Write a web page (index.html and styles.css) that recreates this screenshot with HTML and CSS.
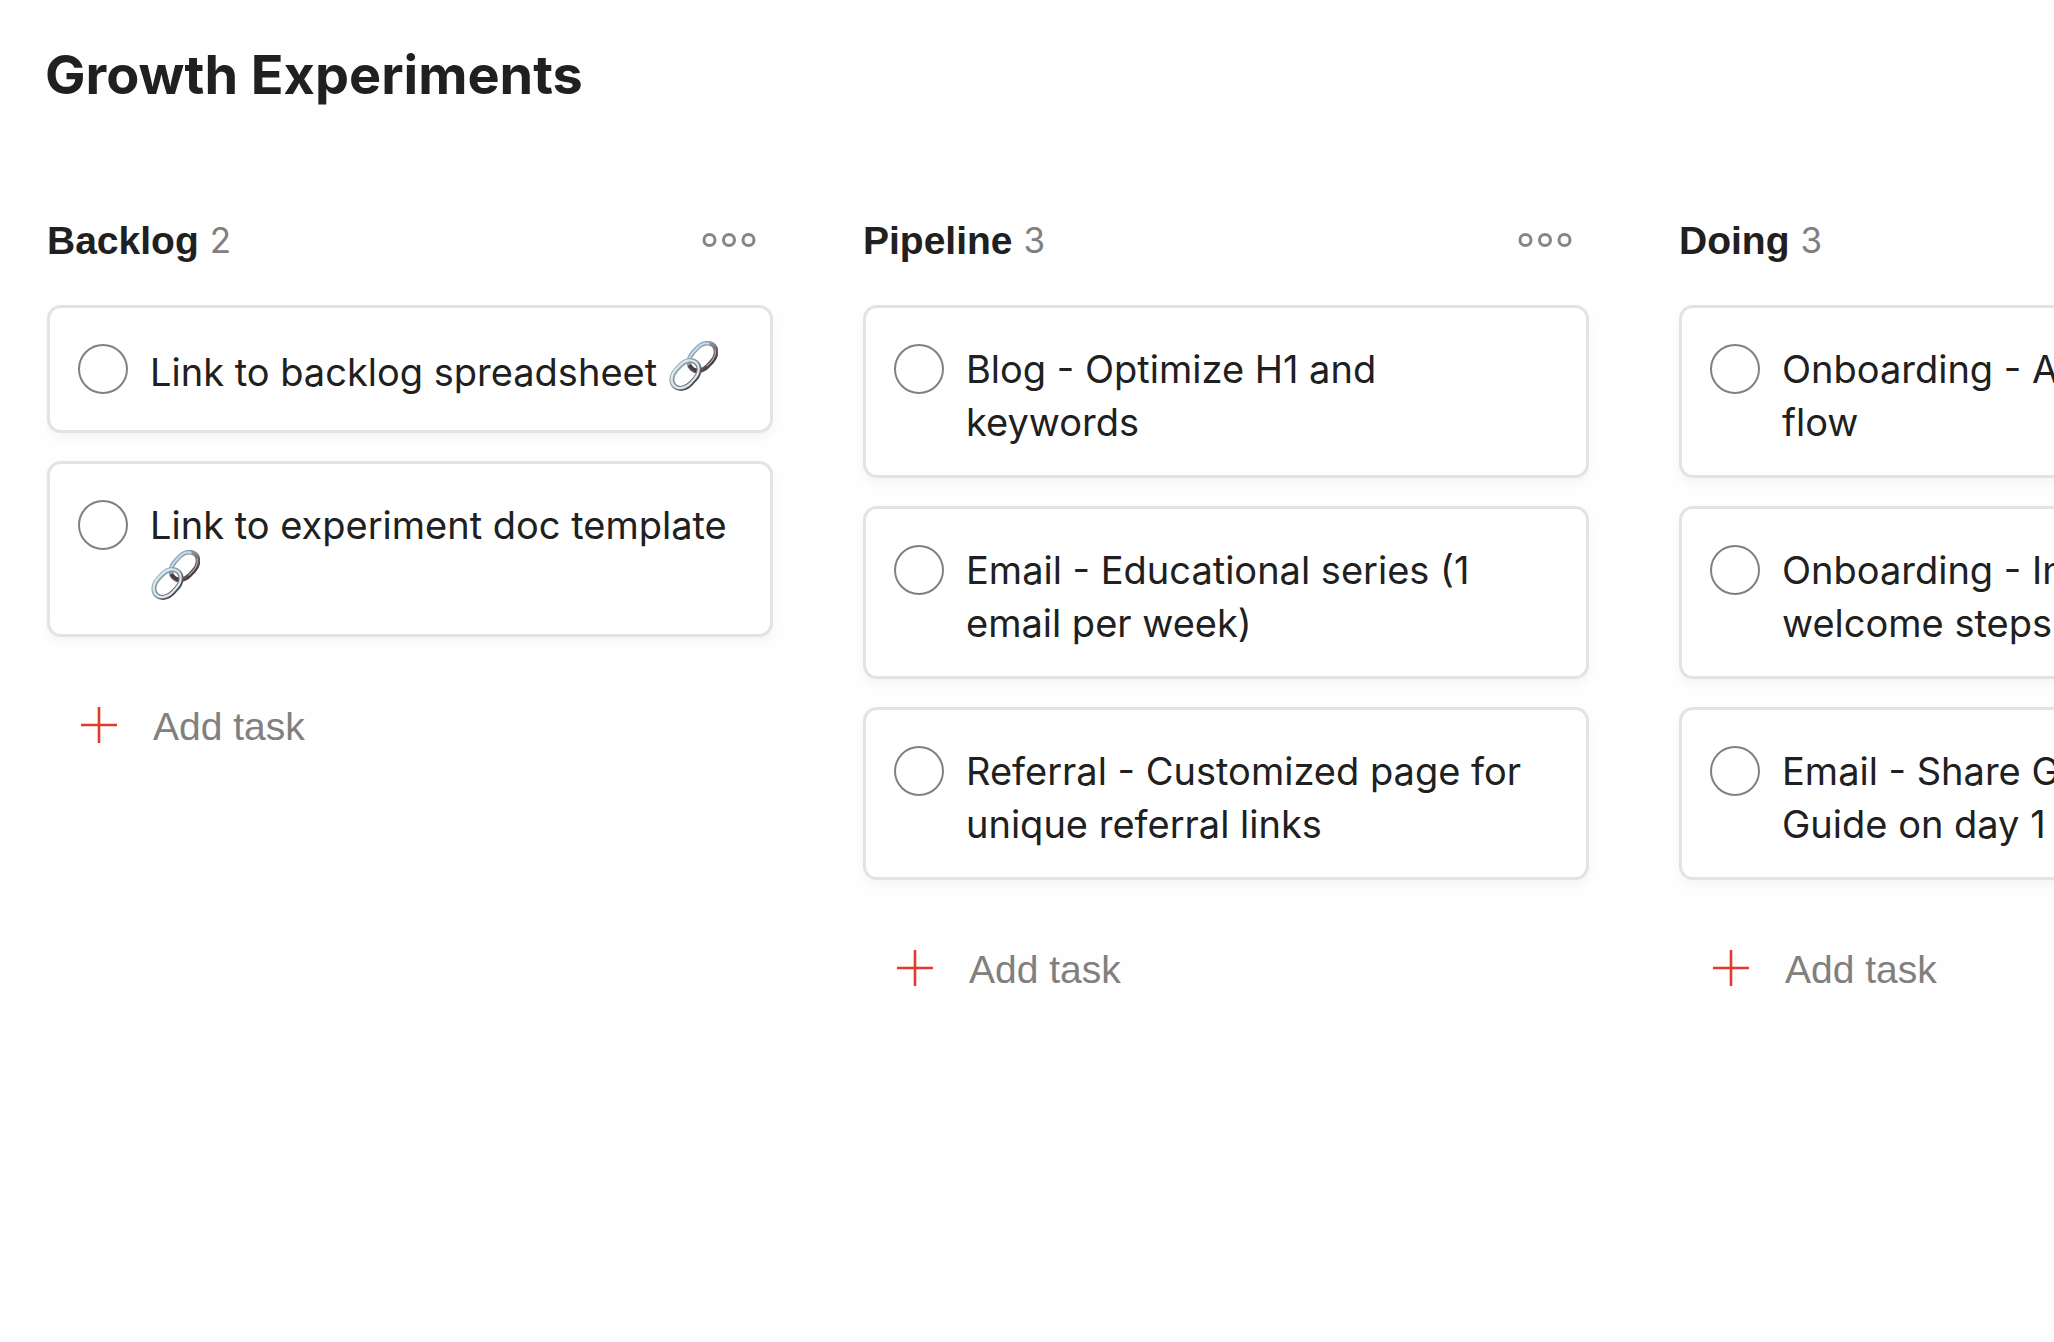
FILE: index.html
```html
<!DOCTYPE html>
<html lang="en">
<head>
<meta charset="utf-8">
<meta name="viewport" content="width=device-width, initial-scale=1">
<title>Growth Experiments</title>
<link rel="stylesheet" href="styles.css">
</head>
<body>
<svg class="defs" aria-hidden="true">
  <defs>
    <linearGradient id="steel" gradientUnits="userSpaceOnUse" x1="0" y1="-11" x2="0" y2="11">
      <stop offset="0" stop-color="#8ba6bd"/>
      <stop offset="0.5" stop-color="#8a8790"/>
      <stop offset="1" stop-color="#4d3d42"/>
    </linearGradient>
    <linearGradient id="steel-front" gradientUnits="userSpaceOnUse" x1="0" y1="-11" x2="0" y2="11">
      <stop offset="0" stop-color="#93a9b8"/>
      <stop offset="0.5" stop-color="#7f8d99"/>
      <stop offset="1" stop-color="#51484d"/>
    </linearGradient>
    <symbol id="link" viewBox="0 0 50 50">
      <g fill="none">
        <g transform="translate(34.500 16) rotate(-47)">
          <rect x="-16" y="-10" width="32" height="20" rx="13" ry="10" stroke="url(#steel)" stroke-width="4.600"/>
          <path d="M-13-7C-10-9.500-7-10-3-10H3C8-10 12-8.500 14.500-4" stroke="#c9dcea" stroke-width="2"/>
          <path d="M-15-4C-16 0-15 5-11 8" stroke="#4d3d42" stroke-width="4"/>
          <path d="M-4 9.500H3C8 9.500 12 7 14 4" stroke="#b7b2bd" stroke-width="1"/>
        </g>
        <g transform="translate(17.500 33.500) rotate(-47)">
          <rect x="-16" y="-10" width="32" height="20" rx="13" ry="10" stroke="url(#steel-front)" stroke-width="5"/>
          <rect x="-16" y="-10.500" width="32" height="20" rx="13" ry="10" stroke="#dbe8f0" stroke-width="2.200"/>
        </g>
      </g>
    </symbol>
    <symbol id="dots" viewBox="0 0 54 16">
      <g fill="none" stroke="#858585" stroke-width="3">
        <circle cx="7.500" cy="8" r="5.500"/><circle cx="27" cy="8" r="5.500"/><circle cx="46.500" cy="8" r="5.500"/>
      </g>
    </symbol>
    <symbol id="plus" viewBox="0 0 36 36">
      <path d="M18 0v36M0 18h36" fill="none" stroke="#e03b2b" stroke-width="2.600"/>
    </symbol>
  </defs>
</svg>
<main class="project">
  <h1 class="project-title">Growth Experiments</h1>
  <div class="board">
    <section class="column">
      <header class="column-header">
        <h2 class="column-title">Backlog</h2>
        <span class="column-count">2</span>
        <button class="column-menu" type="button" aria-label="Backlog options"><svg class="dots"><use href="#dots"/></svg></button>
      </header>
      <ul class="cards">
        <li><label class="card"><input class="check" type="checkbox"><span class="card-text">Link to backlog spreadsheet <svg class="link" role="img" aria-label="link"><use href="#link"/></svg></span></label></li>
        <li><label class="card"><input class="check" type="checkbox"><span class="card-text">Link to experiment doc template <svg class="link" role="img" aria-label="link"><use href="#link"/></svg></span></label></li>
      </ul>
      <button class="add-task" type="button"><svg class="plus"><use href="#plus"/></svg>Add task</button>
    </section>
    <section class="column">
      <header class="column-header">
        <h2 class="column-title">Pipeline</h2>
        <span class="column-count">3</span>
        <button class="column-menu" type="button" aria-label="Pipeline options"><svg class="dots"><use href="#dots"/></svg></button>
      </header>
      <ul class="cards">
        <li><label class="card"><input class="check" type="checkbox"><span class="card-text">Blog - Optimize H1 and keywords</span></label></li>
        <li><label class="card"><input class="check" type="checkbox"><span class="card-text">Email - Educational series (1 email per week)</span></label></li>
        <li><label class="card"><input class="check" type="checkbox"><span class="card-text">Referral - Customized page for unique referral links</span></label></li>
      </ul>
      <button class="add-task" type="button"><svg class="plus"><use href="#plus"/></svg>Add task</button>
    </section>
    <section class="column">
      <header class="column-header">
        <h2 class="column-title">Doing</h2>
        <span class="column-count">3</span>
        <button class="column-menu" type="button" aria-label="Doing options"><svg class="dots"><use href="#dots"/></svg></button>
      </header>
      <ul class="cards">
        <li><label class="card"><input class="check" type="checkbox"><span class="card-text">Onboarding - A/B test signup flow</span></label></li>
        <li><label class="card"><input class="check" type="checkbox"><span class="card-text">Onboarding - Interactive welcome steps</span></label></li>
        <li><label class="card"><input class="check" type="checkbox"><span class="card-text">Email - Share Getting Started Guide on day 1</span></label></li>
      </ul>
      <button class="add-task" type="button"><svg class="plus"><use href="#plus"/></svg>Add task</button>
    </section>
  </div>
</main>
</body>
</html>
```
FILE: styles.css
```css
* {
  box-sizing: border-box;
}

body {
  margin: 0;
  background: #fefefe;
  color: #202020;
  font-family: Inter, "Liberation Sans", sans-serif;
  font-size: 38px;
  line-height: 53px;
  overflow-x: hidden;
}

.defs {
  position: absolute;
  width: 0;
  height: 0;
}

.project {
  padding: 43px 0 48px 45px;
}

.project-title {
  margin: 0 0 107px;
  font-size: 54px;
  line-height: 64px;
  font-weight: 700;
}

.board {
  display: flex;
  align-items: flex-start;
  gap: 90px;
  padding-left: 2px;
  overflow: hidden;
}

.column {
  flex: 0 0 726px;
}

.column-header {
  display: flex;
  align-items: center;
  gap: 11px;
  margin-bottom: 38px;
  padding-right: 17px;
}

.column-title {
  margin: 0;
  font-family: "Liberation Sans", Arial, sans-serif;
  font-size: 39px;
  font-weight: 700;
}

.column-count {
  color: #808080;
  font-size: 35px;
  font-weight: 400;
}

.column-menu {
  display: flex;
  margin: 0 0 2px auto;
  padding: 0;
  border: 0;
  background: none;
}

.dots {
  width: 54px;
  height: 16px;
}

.cards {
  display: grid;
  gap: 28px;
  margin: 0;
  padding: 0;
  list-style: none;
}

.card {
  display: flex;
  align-items: flex-start;
  gap: 22px;
  min-height: 128px;
  padding: 35px 27px 26px 28px;
  border: 3px solid #e3e3e3;
  border-radius: 14px;
  background: #fff;
  box-shadow: 0 5px 10px rgba(0, 0, 0, 0.04);
}

.check {
  flex: none;
  width: 50px;
  height: 50px;
  margin: 1px 0 0;
  border: 2px solid #808080;
  border-radius: 50%;
  background: #fff;
  appearance: none;
}

.link {
  width: 50px;
  height: 50px;
  margin-top: -2px;
  vertical-align: -5px;
}

.add-task {
  display: flex;
  align-items: center;
  gap: 36px;
  margin-top: 63px;
  padding: 0 0 0 34px;
  border: 0;
  background: none;
  color: #808080;
  font: 39px/53px "Liberation Sans", Arial, sans-serif;
}

.plus {
  width: 36px;
  height: 36px;
  margin-bottom: 4px;
}
```
